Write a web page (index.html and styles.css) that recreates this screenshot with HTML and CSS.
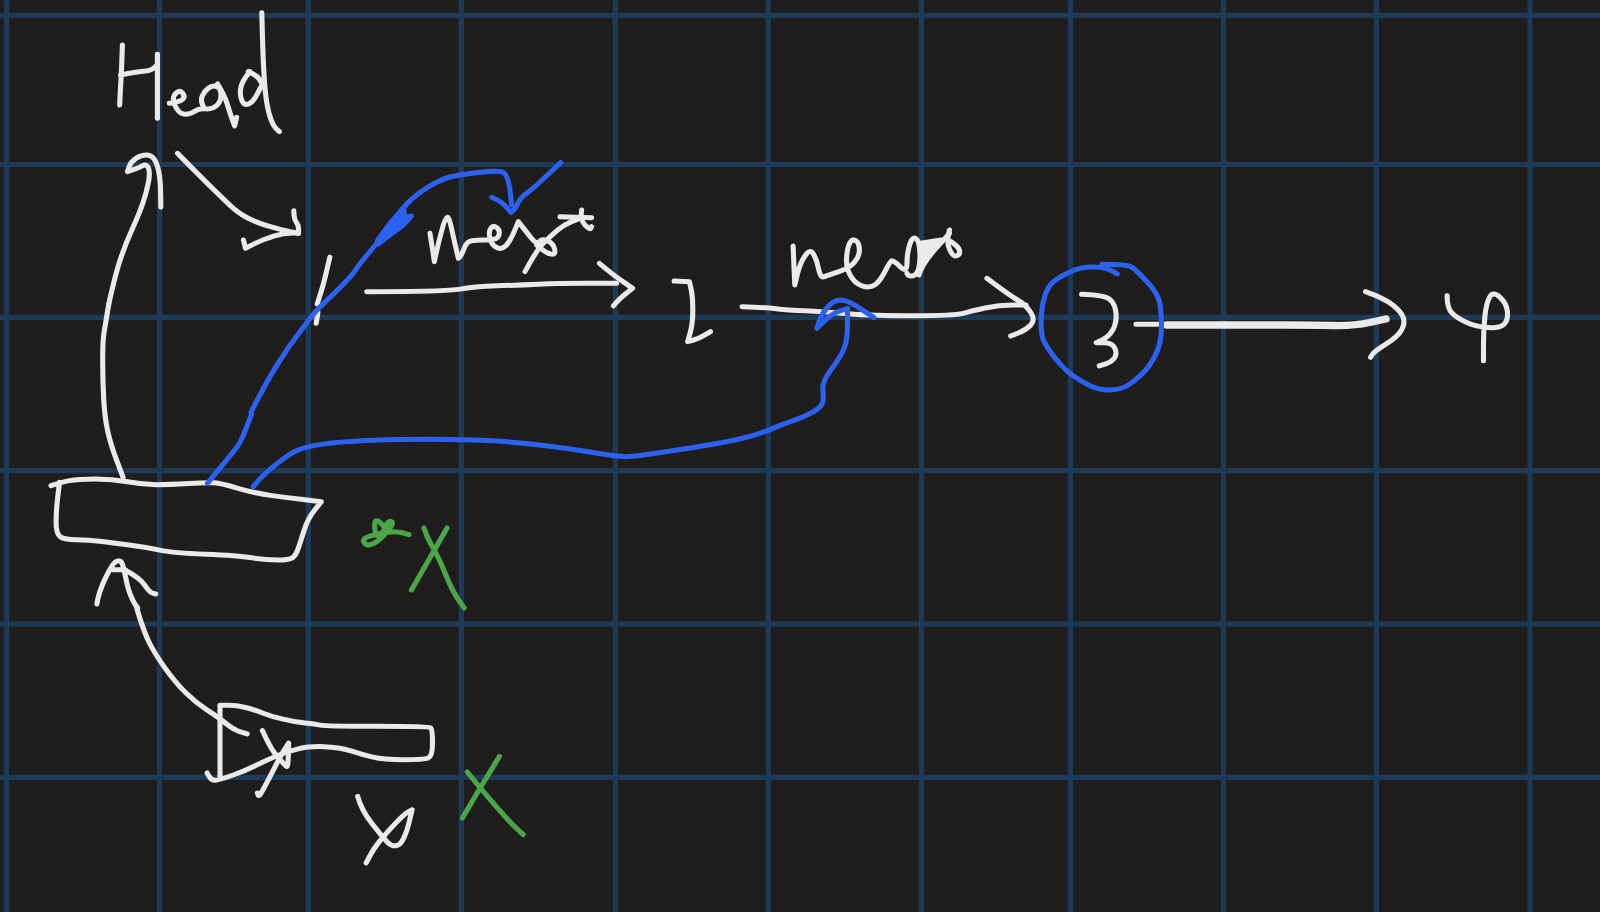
FILE: index.html
```html
<!DOCTYPE html>
<html lang="en">
<head>
<meta charset="utf-8">
<title>Whiteboard</title>
<link rel="stylesheet" href="styles.css">
</head>
<body>
<svg class="board" viewBox="0 0 1600 912" width="1600" height="912" xmlns="http://www.w3.org/2000/svg">
  <g class="grid">
    <path d="M6.5 0V912M159.5 0V912M308.3 0V912M461.3 0V912M615.3 0V912M768.3 0V912M921.5 0V912M1070.4 0V912M1223.4 0V912M1376.4 0V912M1530 0V912"/>
    <path d="M0 15.3H1600M0 164.5H1600M0 317.3H1600M0 470.7H1600M0 624H1600M0 777.3H1600"/>
  </g>

  <!-- top-left: Head, arrows -->
  <g class="ink white" transform="scale(.34 .3333)">
    <path d="M360 135L358 200L354 270L352 315"/>
    <path d="M355 225L400 216L445 212L462 195"/>
    <path d="M463 163L463 355"/>
    <path d="M498 310L530 305L545 290L530 270L510 285L510 310L530 343L560 343L585 325L625 328L650 305L650 265L625 255L600 275L590 300L600 325"/>
    <path d="M640 252L660 285L675 335L690 378L690 378L696 352"/>
    <path d="M770 38L772 120L775 200L780 280L790 340L805 380L822 395"/>
    <path d="M735 215L710 245L705 290L720 318L745 305L768 260"/>
    <path d="M730 215L755 225L770 250"/>
    <path d="M320 912L340 820L370 730L410 640L430 580L442 520L432 490L405 505L375 515L375 515L385 485L415 465L445 465L462 490L472 540L473 622"/>
    <path d="M522 460L570 510L640 580L700 640L760 670L830 690L878 700L878 700L878 675L866 660L864 632"/>
    <path d="M878 700L840 697L770 720L722 745L722 745L716 720"/>
    <path d="M970 772L955 840L940 890L933 912"/>
  </g>

  <!-- left column: box, arrows -->
  <g class="ink white" transform="translate(0 304) scale(.34 .3333)">
    <path d="M320 0L310 60L302 110L302 230L308 340L325 420L362 520"/>
    <path d="M935 25L930 58"/>
    <path d="M150 545L178 535L230 525L330 525L420 542L500 542L610 535L650 538L750 568L850 582L945 593L945 593L905 645L885 710L870 755L850 768L780 768L700 755L510 747L430 730L340 718L260 707L190 707L165 690L165 620L175 535"/>
    <path d="M285 900L290 865L330 780L350 767L362 780L375 850L390 890L405 912"/>
    <path d="M362 795L410 820L440 865L458 870"/>
    <path d="M332 797L368 797"/>
  </g>

  <!-- bottom: second box -->
  <g class="ink white" transform="translate(50 608) scale(.34 .3333)">
    <path d="M255 0L275 70L310 140L370 225L430 285L495 328L540 365L580 378"/>
    <path d="M500 505L500 292L500 292L550 292L600 305L650 325L720 342L780 348L810 355L1115 355L1125 365L1125 445L1100 455L980 455L920 440L850 417L760 415L700 430L640 455L570 490L500 515L475 518L462 495"/>
    <path d="M625 368L650 425L690 470L700 480L702 405L702 405L680 440L645 510L615 568L610 555"/>
    <path d="M905 565L915 605L980 690L1005 715L1030 712L1050 670L1065 605L1065 605L1040 620L985 680L950 725L930 765"/>
  </g>

  <!-- next, first arrow -->
  <g class="ink white" transform="translate(350 150) scale(.3333)">
    <path d="M240 250L248 300L253 335L253 335L265 280L285 205L297 200L310 260L325 325L325 325L335 315L350 275L380 270L420 270L445 265L450 240L430 225L415 245L425 285L455 300L480 275L505 215L505 215L525 240L560 285L575 265L610 280L618 315L590 310L560 285"/>
    <path d="M525 365L560 300L600 260L640 225L690 205"/>
    <path d="M630 200L725 203"/>
    <path d="M695 180L690 210L720 240L725 230"/>
    <path d="M50 425L290 425L370 410L510 405L620 400L800 400"/>
    <path d="M748 340L790 375L848 415L848 415L810 445L790 468"/>
  </g>

  <!-- 2, second arrow, next -->
  <g class="ink white" transform="translate(533 200) scale(.34 .3333)">
    <path d="M415 243L460 245L460 245L470 290L470 370L455 425L455 425L490 415L522 395"/>
    <path d="M615 320L680 322L750 330L850 335L1000 347L1240 347L1290 333L1370 315L1450 315"/>
    <path d="M1335 235L1400 285L1450 315L1478 360L1450 390L1405 408"/>
    <path d="M765 138L770 255L770 255L785 190L815 145L835 180L845 235L870 225L930 205L960 170L960 130L940 115L925 140L920 200L945 250L990 265L1020 245L1050 185L1060 180L1100 220L1100 160L1115 110L1135 120L1140 180L1130 225L1105 230L1100 220"/>
    <path d="M1135 225L1145 190L1225 100"/>
    <path class="fill white-fill" d="M1140 130L1200 120L1150 190Z"/>
    <path d="M1225 90L1215 125L1235 170L1255 165L1255 145L1230 125"/>
  </g>

  <!-- 3, third arrow, phi -->
  <g class="ink white" transform="translate(1000 230) scale(.34 .3333)">
    <path d="M240 193L310 195L340 225L343 280L320 320L283 338L283 338L330 338L345 370L330 395L292 408"/>
    <path d="M400 283L470 283"/>
    <path class="heavy" d="M490 285L760 285L920 285L1040 288L1135 267"/>
    <path d="M1075 185L1130 205L1180 245L1192 280L1170 320L1100 365L1090 382"/>
    <path d="M1315 197L1315 235L1345 265L1400 290L1470 295L1495 270L1490 220L1450 183L1430 220L1422 300L1422 392"/>
  </g>

  <!-- blue strokes -->
  <g class="ink blue" transform="translate(350 150) scale(.3333)">
    <path d="M-81 462L0 385L30 340L85 275L160 170L210 125L270 90L320 75L450 60L470 75L480 115L485 165"/>
    <path d="M425 142L455 155L483 187L483 187L497 175L510 145L550 115L632 38"/>
    <path class="fill blue-fill" d="M82 272L120 220L162 172L162 203L184 198L160 225L100 270L85 282Z"/>
  </g>
  <g class="ink blue" transform="translate(0 304) scale(.34 .3333)">
    <path d="M610 538L690 440L710 410L740 330"/>
    <path d="M738 325L780 240L850 125L930 20L950 0"/>
    <path d="M745 548L765 520L850 450L900 428L1000 413L1200 405L1440 408L1568 421"/>
  </g>
  <g class="ink blue" transform="translate(533 200) scale(.34 .3333)">
    <path d="M0 733L100 745L250 770L300 770L500 738L600 720L680 697L735 672L800 650L850 620L855 590L850 545L905 470L925 420L925 325L925 325L880 340L835 385L835 385L850 340L885 300L925 300L1003 353"/>
  </g>
  <g class="ink blue" transform="translate(1000 230) scale(.34 .3333)">
    <path d="M300 103L375 103L400 120L460 185L475 235L475 340L440 410L400 450L355 480L290 480L240 455L190 420L135 350L120 310L122 230L140 170L175 140L240 110L310 112L345 132"/>
  </g>

  <!-- green strokes -->
  <g class="ink green" transform="translate(0 304) scale(.34 .3333)">
    <path d="M1203 692L1170 680L1110 690L1065 703L1075 725L1100 720L1130 695L1160 655L1140 650L1125 690L1105 700L1100 650L1115 650L1130 670"/>
    <path d="M1315 672L1210 858"/>
    <path d="M1247 672L1255 700L1290 760L1330 860L1365 912"/>
  </g>
  <g class="ink green" transform="translate(50 608) scale(.34 .3333)">
    <path d="M1322 445L1265 540L1213 630"/>
    <path d="M1227 492L1265 540L1350 640L1392 680"/>
  </g>
</svg>
<script src="smooth.js"></script>
</body>
</html>
```

FILE: styles.css
```css
html, body {
  margin: 0;
  padding: 0;
  background: #1f1e1d;
  overflow: hidden;
}

.board {
  display: block;
}

.grid path {
  fill: none;
  stroke: #1d3b58;
  stroke-width: 5.2;
}

.ink path {
  fill: none;
  stroke-width: 15;
  stroke-linecap: round;
  stroke-linejoin: round;
}

.white path { stroke: #ebeae8; }
.blue path { stroke: #2b62f2; }
.green path { stroke: #4aa648; }

.ink .heavy { stroke-width: 22; }
.ink .white-fill { fill: #ebeae8; }
.ink .blue-fill { fill: #2b62f2; }
```

FILE: smooth.js
```js
// Turn each pen stroke's sampled points into a smooth quadratic curve.
document.querySelectorAll('.ink path:not(.fill)').forEach(function (stroke) {
  var nums = stroke.getAttribute('d').match(/-?\d+(\.\d+)?/g).map(Number);
  var pts = [];
  for (var i = 0; i < nums.length; i += 2) pts.push([nums[i], nums[i + 1]]);
  if (pts.length < 3) return;
  var d = 'M' + pts[0].join(' ');
  for (var j = 1; j < pts.length - 1; j++) {
    var mx = (pts[j][0] + pts[j + 1][0]) / 2;
    var my = (pts[j][1] + pts[j + 1][1]) / 2;
    d += 'Q' + pts[j].join(' ') + ' ' + mx + ' ' + my;
  }
  d += 'L' + pts[pts.length - 1].join(' ');
  stroke.setAttribute('d', d);
});
```
